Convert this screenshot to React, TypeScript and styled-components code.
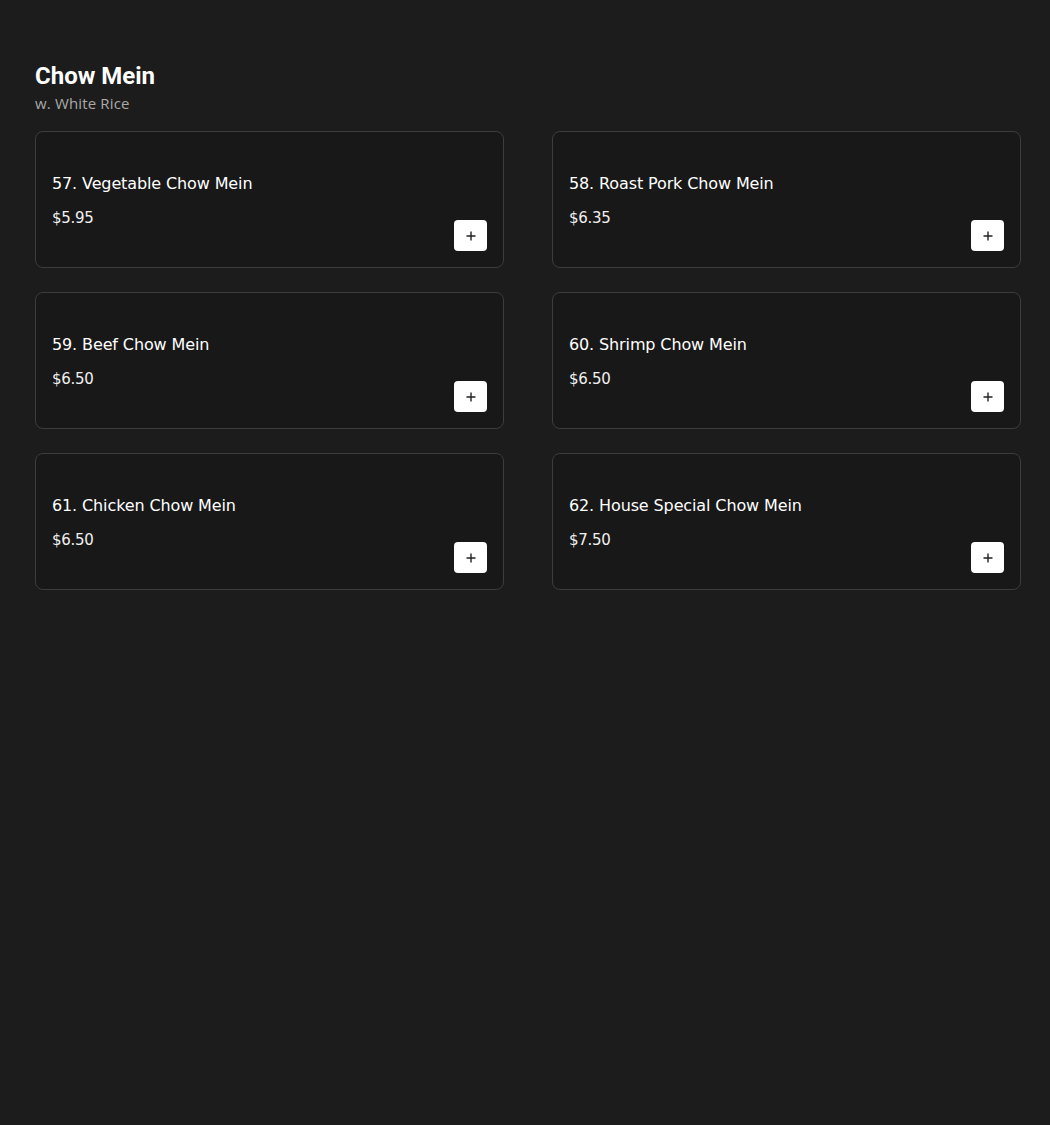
import React from "react";
import styled, { createGlobalStyle } from "styled-components";

const Global = createGlobalStyle`
  html, body { margin: 0; padding: 0; background: #1c1c1c; }
  body { font-family: "DejaVu Sans", "Open Sans", sans-serif; color: #fff; }
`;

const Page = styled.div`
  min-height: 1125px;
  box-sizing: border-box;
  padding: 60px 29px 40px 35px;
  background: #1c1c1c;
`;

const Heading = styled.h2`
  margin: 0;
  font-family: Roboto, "Liberation Sans", sans-serif;
  font-weight: 700;
  font-size: 24px;
  line-height: 32px;
  color: #fff;
`;

const Sub = styled.p`
  margin: 1px 0 0;
  font-family: "Open Sans", sans-serif;
  font-size: 15px;
  line-height: 20px;
  letter-spacing: 0.15px;
  color: #a9a9a9;
`;

const Grid = styled.div`
  margin-top: 18px;
  display: grid;
  grid-template-columns: 1fr 1fr;
  column-gap: 48px;
  row-gap: 24px;
`;

const Card = styled.div`
  position: relative;
  box-sizing: border-box;
  height: 137px;
  border: 1px solid #3d3d3d;
  border-radius: 8px;
  background: #181818;
  padding: 16px;
  display: flex;
  flex-direction: column;
`;

const Title = styled.div`
  margin-top: 25px;
  font-family: "DejaVu Sans", sans-serif;
  font-size: 16px;
  font-weight: 500;
  line-height: 22px;
  letter-spacing: -0.12px;
  color: #fff;
`;

const Price = styled.div`
  margin-top: 12px;
  font-family: "DejaVu Sans", sans-serif;
  font-size: 15px;
  line-height: 22px;
  letter-spacing: -0.3px;
  color: #f0f0f0;
`;

const AddButton = styled.button`
  position: absolute;
  right: 16px;
  bottom: 16px;
  width: 33px;
  height: 31px;
  border: none;
  border-radius: 4px;
  background: #fff;
  display: flex;
  align-items: center;
  justify-content: center;
  padding: 0;
  cursor: pointer;
`;

const items = [
  { name: "57. Vegetable Chow Mein", price: "$5.95" },
  { name: "58. Roast Pork Chow Mein", price: "$6.35" },
  { name: "59. Beef Chow Mein", price: "$6.50" },
  { name: "60. Shrimp Chow Mein", price: "$6.50" },
  { name: "61. Chicken Chow Mein", price: "$6.50" },
  { name: "62. House Special Chow Mein", price: "$7.50" },
];

const Plus = () => (
  <svg width="12" height="12" viewBox="0 0 12 12">
    <path d="M6 1.5v9M1.5 6h9" stroke="#222" strokeWidth="1.4" />
  </svg>
);

export default function App() {
  return (
    <>
      <Global />
      <Page>
        <Heading>Chow Mein</Heading>
        <Sub>w. White Rice</Sub>
        <Grid>
          {items.map((it) => (
            <Card key={it.name}>
              <Title>{it.name}</Title>
              <Price>{it.price}</Price>
              <AddButton aria-label="add">
                <Plus />
              </AddButton>
            </Card>
          ))}
        </Grid>
      </Page>
    </>
  );
}
